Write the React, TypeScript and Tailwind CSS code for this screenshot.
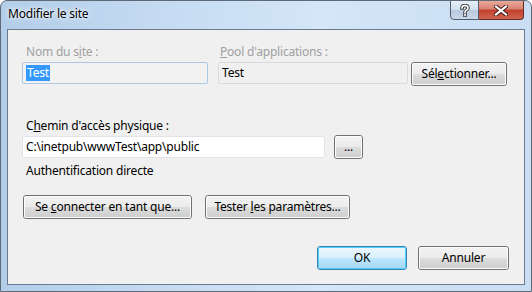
import React from "react";

const font = { fontFamily: '"Noto Sans", "Open Sans", sans-serif', letterSpacing: "-0.2px" };

function Btn({
  children,
  className = "",
  focused = false,
}: {
  children: React.ReactNode;
  className?: string;
  focused?: boolean;
}) {
  return (
    <div
      className={
        "relative flex items-center justify-center rounded-[3px] border text-[12px] leading-none text-black " +
        (focused ? "border-[#3c7fb1] " : "border-[#707070] ") +
        className
      }
    >
      <div
        className={
          "absolute inset-0 rounded-[2px] border " +
          (focused
            ? "border-[#48d3fb] bg-[linear-gradient(#eaf6fd_0%,#d9f0fc_50%,#bee6fd_50%,#a7d9f5_100%)] "
            : "border-[#fcfcfc] bg-[linear-gradient(#f2f2f2_0%,#ebebeb_50%,#dddddd_50%,#cfcfcf_100%)] ")
        }
      />
      <span className="relative pb-[1px]">{children}</span>
    </div>
  );
}

export default function App() {
  return (
    <div
      className="relative h-[292px] w-[532px] overflow-hidden rounded-t-[7px] border border-[#5f6a78] bg-[linear-gradient(90deg,#b3cde9_0%,#c7ddf3_35%,#d4e6f8_60%,#c9def4_100%)]"
      style={font}
    >
      {/* Title bar */}
      <div className="flex h-[28px] items-start">
        <div
          className="pl-[7px] pt-[5px] text-[12px] leading-[16px] text-black"
          style={{ textShadow: "0 0 6px #ffffff, 0 0 3px #ffffff" }}
        >
          Modifier le site
        </div>
        <div className="ml-auto mr-[7px] -mt-[1px] flex h-[20px]">
          <div className="relative flex w-[29px] items-center justify-center rounded-bl-[4px] border border-[#4f5d6e] bg-[linear-gradient(#e6eef7_0%,#d3e0ee_48%,#b9cadd_52%,#c9d8e8_100%)]">
            <svg width="12" height="13" viewBox="0 0 12 13">
              <path
                d="M3 4 Q3 1.5 6 1.5 Q9 1.5 9 4 Q9 5.5 7 6.5 Q6 7 6 8.5 M6 10.5 L6 11.5"
                fill="none"
                stroke="#3b3f45"
                strokeWidth="3.6"
                strokeLinecap="square"
              />
              <path
                d="M3 4 Q3 1.5 6 1.5 Q9 1.5 9 4 Q9 5.5 7 6.5 Q6 7 6 8.5 M6 10.5 L6 11.5"
                fill="none"
                stroke="#ffffff"
                strokeWidth="1.6"
                strokeLinecap="square"
              />
            </svg>
          </div>
          <div className="flex w-[45px] items-center justify-center rounded-br-[4px] border border-l-0 border-[#6b2a22] bg-[linear-gradient(#e9a99a_0%,#d98271_45%,#c0412e_50%,#d0644d_100%)]">
            <svg width="14" height="11" viewBox="0 0 14 11">
              <path
                d="M2 1.5 L12 9.5 M12 1.5 L2 9.5"
                stroke="#3a1a16"
                strokeWidth="4"
                strokeLinecap="square"
              />
              <path
                d="M2 1.5 L12 9.5 M12 1.5 L2 9.5"
                stroke="#ffffff"
                strokeWidth="2.2"
                strokeLinecap="square"
              />
            </svg>
          </div>
        </div>
      </div>

      {/* Content panel */}
      <div className="mx-[6px] h-[256px] border border-[#6a7b8f] bg-[#f0f0f0]">
        <div className="flex flex-col pl-[14px] pt-[14px]">
          {/* Row 1 */}
          <div className="flex items-end">
            <div className="flex w-[186px] flex-col">
              <div className="pl-[4px] text-[12px] leading-[16px] text-[#a0a0a0]">
                Nom du s<span className="underline">i</span>te :
              </div>
              <div className="mt-[2px] flex h-[22px] items-center rounded-[2px] border border-[#aac8e4] bg-[#f2f2f2] pl-[3px]">
                <span className="bg-[#3399ff] px-[1px] text-[12px] leading-[16px] text-white">Test</span>
              </div>
            </div>
            <div className="ml-[10px] flex w-[190px] flex-col">
              <div className="pl-[2px] text-[12px] leading-[16px] text-[#a0a0a0]">
                <span className="underline">P</span>ool d'applications :
              </div>
              <div className="mt-[2px] flex h-[22px] items-center rounded-[2px] border border-[#dadada] bg-[#f0f0f0] pl-[3px] text-[12px] text-black">
                Test
              </div>
            </div>
            <Btn className="mb-[-2px] ml-[3px] h-[24px] w-[96px]">
              Sél<span className="underline">e</span>ctionner...
            </Btn>
          </div>

          {/* Path */}
          <div className="mt-[34px] pl-[4px] text-[12px] leading-[16px] text-black">
            C<span className="underline">h</span>emin d'accès physique :
          </div>
          <div className="mt-[1px] flex items-center">
            <div className="flex h-[22px] w-[303px] items-center rounded-[2px] border border-[#e2e3ea] bg-white pl-[3px] text-[12px] text-black">
              C:\inetpub\wwwTest\app\public
            </div>
            <Btn className="ml-[9px] h-[24px] w-[29px]">...</Btn>
          </div>
          <div className="mt-[4px] pl-[4px] text-[12px] leading-[16px] text-black">
            Authentification directe
          </div>

          {/* Buttons row */}
          <div className="mt-[16px] flex pl-[1px]">
            <Btn className="h-[24px] w-[169px]">
              Se <span className="underline">c</span>onnecter en tant que...
            </Btn>
            <Btn className="ml-[13px] h-[24px] w-[145px]">
              Tester <span className="underline">l</span>es paramètres...
            </Btn>
          </div>

          {/* OK / Cancel */}
          <div className="mt-[27px] flex justify-end pr-[15px]">
            <Btn focused className="h-[24px] w-[90px]">
              OK
            </Btn>
            <Btn className="ml-[11px] h-[24px] w-[91px]">Annuler</Btn>
          </div>
        </div>
      </div>
    </div>
  );
}
